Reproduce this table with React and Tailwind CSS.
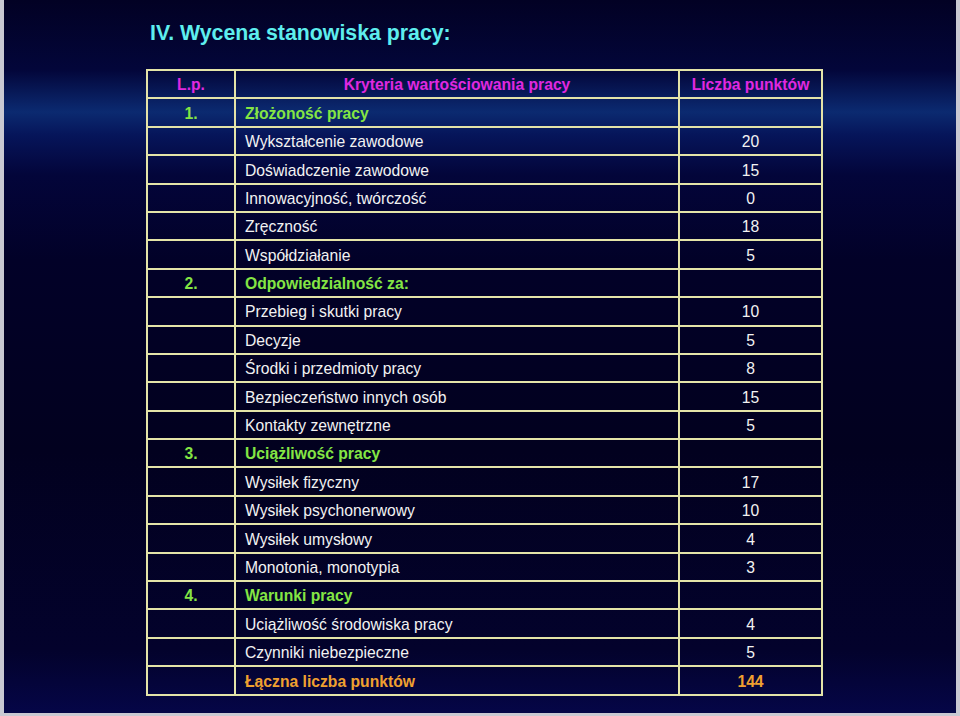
import React from 'react';

const rows = [
  { lp: '1.', label: 'Złożoność pracy', kind: 'section' },
  { label: 'Wykształcenie zawodowe', pts: '20' },
  { label: 'Doświadczenie zawodowe', pts: '15' },
  { label: 'Innowacyjność, twórczość', pts: '0' },
  { label: 'Zręczność', pts: '18' },
  { label: 'Współdziałanie', pts: '5' },
  { lp: '2.', label: 'Odpowiedzialność za:', kind: 'section' },
  { label: 'Przebieg i skutki pracy', pts: '10' },
  { label: 'Decyzje', pts: '5' },
  { label: 'Środki i przedmioty pracy', pts: '8' },
  { label: 'Bezpieczeństwo innych osób', pts: '15' },
  { label: 'Kontakty zewnętrzne', pts: '5' },
  { lp: '3.', label: 'Uciążliwość pracy', kind: 'section' },
  { label: 'Wysiłek fizyczny', pts: '17' },
  { label: 'Wysiłek psychonerwowy', pts: '10' },
  { label: 'Wysiłek umysłowy', pts: '4' },
  { label: 'Monotonia, monotypia', pts: '3' },
  { lp: '4.', label: 'Warunki pracy', kind: 'section' },
  { label: 'Uciążliwość środowiska pracy', pts: '4' },
  { label: 'Czynniki niebezpieczne', pts: '5' },
  { label: 'Łączna liczba punktów', pts: '144', kind: 'total' },
];

const cell = 'border-2 border-[#e4e4a8] p-0 pt-[2px] h-[28.4px] align-middle';

export default function App() {
  return (
    <div className="w-[960px] h-[716px] bg-[#c9c9d2] pl-[4px] pr-[4px] pb-[3px] font-['Liberation_Sans',Arial,sans-serif]">
      <div className="w-full h-full bg-[linear-gradient(to_bottom,#020124_0px,#03063a_70px,#0a2468_105px,#0b2a70_112px,#06155a_135px,#03053a_175px,#020128_260px,#02011f_450px,#03022c_650px,#050647_713px)]">
        <div className="pl-[142px] pt-[20px]">
          <h1 className="pl-[4px] text-[21.3px] leading-[27px] font-bold text-[#5eeeee]">IV. Wycena stanowiska pracy:</h1>
          <table className="mt-[22px] border-collapse table-fixed w-[675px] text-[15.7px] leading-none">
            <colgroup>
              <col className="w-[88px]" />
              <col className="w-[444px]" />
              <col className="w-[143px]" />
            </colgroup>
            <thead>
              <tr>
                <th className={`${cell} text-center font-bold text-[#e028e0]`}>L.p.</th>
                <th className={`${cell} text-center font-bold text-[#e028e0]`}>Kryteria wartościowania pracy</th>
                <th className={`${cell} text-center font-bold text-[#e028e0]`}>Liczba punktów</th>
              </tr>
            </thead>
            <tbody>
              {rows.map((r, i) => {
                const section = r.kind === 'section';
                const total = r.kind === 'total';
                const labelCls = section
                  ? 'font-bold text-[#84e544]'
                  : total
                  ? 'font-bold text-[#f0a030]'
                  : 'text-[#f2f2f2]';
                return (
                  <tr key={i}>
                    <td className={`${cell} text-center font-bold text-[#84e544]`}>{r.lp || ''}</td>
                    <td className={`${cell} pl-[9px] text-left ${labelCls}`}>{r.label}</td>
                    <td className={`${cell} text-center ${total ? 'font-bold text-[#f0a030]' : 'text-[#f2f2f2]'}`}>
                      {r.pts || ''}
                    </td>
                  </tr>
                );
              })}
            </tbody>
          </table>
        </div>
      </div>
    </div>
  );
}
